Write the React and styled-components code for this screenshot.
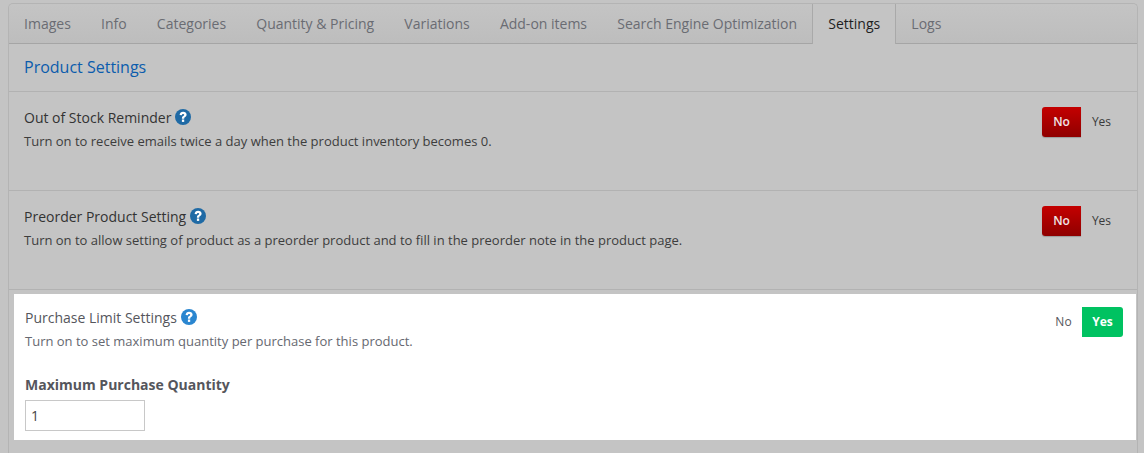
import React from "react";
import styled, { createGlobalStyle } from "styled-components";

const Global = createGlobalStyle`
  html, body { margin: 0; padding: 0; height: 453px; overflow: hidden; background: #c4c4c4; }
  body { font-family: "Open Sans", "Liberation Sans", sans-serif; }
`;
const Page = styled.div`
  padding: 3px 6px 0 8px;
  height: 450px;
`;
const Panel = styled.div`
  height: 100%;
  box-sizing: border-box;
  border: 1px solid #b4b4b4;
  border-bottom: none;
  border-radius: 5px 5px 0 0;
`;
const TabBar = styled.div`
  display: flex;
  height: 40px;
  box-sizing: border-box;
  border-bottom: 1px solid #a5a5a5;
  background: linear-gradient(#c4c4c4, #bdbdbd);
  border-radius: 5px 5px 0 0;
`;
const Tab = styled.div`
  box-sizing: content-box;
  height: 39px;
  line-height: 40px;
  font-size: 14px;
  padding: 0 15.08px;
  color: ${p => (p.$active ? "#1f1f1f" : "#6a6c73")};
  ${p => p.$active && `
    background: #c4c4c4;
    border-left: 1px solid #a9a9a9;
    border-right: 1px solid #a9a9a9;
    height: 40px;
  `}
`;
const Header = styled.h2`
  margin: 0;
  height: 48px;
  box-sizing: border-box;
  padding-left: 15px;
  line-height: 47px;
  font-size: 16px;
  font-weight: 400;
  color: #0b5cad;
  border-bottom: 1px solid #b2b2b2;
`;
const Row = styled.div`
  display: flex;
  justify-content: space-between;
  height: 99px;
  box-sizing: border-box;
  padding: 15px 15px 0 15px;
  border-bottom: 1px solid #b2b2b2;
`;
const HighlightRow = styled.div`
  display: flex;
  justify-content: space-between;
  height: 146px;
  box-sizing: border-box;
  margin: 4px 1px 0 5px;
  padding: 13px 13px 0 11px;
  background: #fff;
`;
const Title = styled.div`
  display: flex;
  align-items: center;
  gap: 4px;
  height: 20px;
  font-size: 14px;
  color: ${p => (p.$light ? "#55565c" : "#333")};
`;
const Desc = styled.div`
  margin-top: 4px;
  font-size: 13px;
  line-height: 20px;
  color: ${p => (p.$light ? "#666870" : "#3d3d3d")};
`;
const FieldLabel = styled.div`
  margin-top: 24px;
  font-size: 14px;
  line-height: 20px;
  font-weight: 700;
  color: #55565c;
`;
const Input = styled.input`
  display: block;
  margin-top: 5px;
  width: 120px;
  height: 31px;
  box-sizing: border-box;
  padding: 0 5px;
  border: 1px solid #c8c8c8;
  font: 14px "Open Sans", sans-serif;
  color: #444;
  background: #fff;
  outline: none;
`;
const Toggle = styled.div`
  display: flex;
  height: 30px;
`;
const Opt = styled.div`
  box-sizing: border-box;
  width: ${p => p.$w}px;
  height: 30px;
  padding-left: ${p => p.$shift || 0}px;
  line-height: 29px;
  text-align: center;
  font-size: 12px;
  color: ${p => (p.$light ? "#55565c" : "#3a3a3a")};
`;
const NoOn = styled(Opt)`
  color: #f0e6e6;
  font-weight: 600;
  border-radius: 3px 0 0 3px;
  background: linear-gradient(#c40000, #8f0000);
  box-shadow: 0 1px 1px rgba(0,0,0,.2);
`;
const YesOn = styled(Opt)`
  color: #fff;
  font-weight: 700;
  border-radius: 0 3px 3px 0;
  background: #00c261;
`;
const Help = ({ color }) => (
  <svg width="16" height="16" viewBox="0 0 16 16" aria-hidden="true">
    <circle cx="8" cy="8" r="8" fill={color} />
    <path d="M4.6 6 C4.7 3.9 6.2 2.7 8.1 2.7 C10.2 2.7 11.6 3.9 11.6 5.6 C11.6 7.1 10.7 7.7 9.8 8.3 C9.3 8.6 9.2 9 9.2 9.7 L6.9 9.7 C6.9 8.4 7.2 7.7 8.1 7.1 C8.9 6.6 9.2 6.3 9.2 5.8 C9.2 5.2 8.8 4.9 8.1 4.9 C7.4 4.9 7 5.3 6.9 6.2 Z" fill="#fff" />
    <rect x="6.9" y="10.5" width="2.3" height="2.4" fill="#fff" />
  </svg>
);
const tabs = ["Images", "Info", "Categories", "Quantity & Pricing", "Variations", "Add-on items", "Search Engine Optimization", "Settings", "Logs"];

export default function App() {
  return (
    <Page>
      <Global />
      <Panel>
        <TabBar>
          {tabs.map(t => <Tab key={t} $active={t === "Settings"}>{t}</Tab>)}
        </TabBar>
        <Header>Product Settings</Header>
        <Row>
          <div>
            <Title>Out of Stock Reminder <Help color="#1f6aa5" /></Title>
            <Desc>Turn on to receive emails twice a day when the product inventory becomes 0.</Desc>
          </div>
          <Toggle><NoOn $w={39}>No</NoOn><Opt $w={41}>Yes</Opt></Toggle>
        </Row>
        <Row>
          <div>
            <Title>Preorder Product Setting <Help color="#1f6aa5" /></Title>
            <Desc>Turn on to allow setting of product as a preorder product and to fill in the preorder note in the product page.</Desc>
          </div>
          <Toggle><NoOn $w={39}>No</NoOn><Opt $w={41}>Yes</Opt></Toggle>
        </Row>
        <HighlightRow>
          <div>
            <Title $light>Purchase Limit Settings <Help color="#2a86d0" /></Title>
            <Desc $light>Turn on to set maximum quantity per purchase for this product.</Desc>
            <FieldLabel>Maximum Purchase Quantity</FieldLabel>
            <Input defaultValue="1" />
          </div>
          <Toggle><Opt $light $w={41} $shift={4}>No</Opt><YesOn $w={41}>Yes</YesOn></Toggle>
        </HighlightRow>
      </Panel>
    </Page>
  );
}
